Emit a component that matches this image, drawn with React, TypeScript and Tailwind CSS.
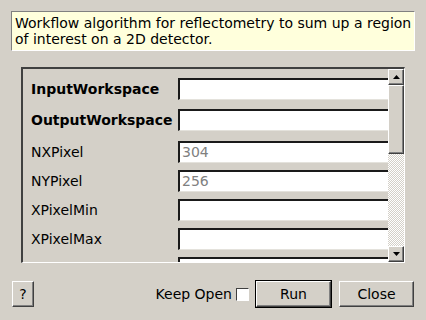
const rows = [
  { label: "InputWorkspace", bold: true, value: "", mt: "mt-[9px]" },
  { label: "OutputWorkspace", bold: true, value: "", mt: "mt-[9px]" },
  { label: "NXPixel", bold: false, value: "304", mt: "mt-[10px]" },
  { label: "NYPixel", bold: false, value: "256", mt: "mt-[7px]" },
  { label: "XPixelMin", bold: false, value: "", mt: "mt-[7px]" },
  { label: "XPixelMax", bold: false, value: "", mt: "mt-[7px]" },
  { label: "YPixelMin", bold: false, value: "", mt: "mt-[7px]" },
]

function Arrow({ up }: { up?: boolean }) {
  return (
    <svg width="7" height="4" viewBox="0 0 7 4">
      {up ? <polygon points="3.5,0 7,4 0,4" fill="#000" /> : <polygon points="0,0 7,0 3.5,4" fill="#000" />}
    </svg>
  )
}

function ScrollButton({ up }: { up?: boolean }) {
  return (
    <div className="w-[16px] h-[16px] flex items-center justify-center border-t border-l border-t-white border-l-white border-b border-r border-b-[#404040] border-r-[#404040] shadow-[inset_-1px_-1px_#808080] bg-[#d4d0c8]">
      <Arrow up={up} />
    </div>
  )
}

export default function App() {
  return (
    <div className="w-[426px] h-[320px] bg-[#d4d0c8] flex flex-col text-[14px] text-black font-['DejaVu_Sans',sans-serif] overflow-hidden">
      {/* description */}
      <div className="mt-[11px] mx-[11px] h-[40px] bg-[#ffffdc] border-t border-l border-[#808080] border-b-white border-r-white border-b border-r pl-[3px] pt-[3px] leading-[16px]">
        Workflow algorithm for reflectometry to sum up a region
        <br />
        of interest on a 2D detector.
      </div>

      {/* properties */}
      <div className="mt-[16px] mx-[21px] h-[196px] flex border-t-2 border-l-2 border-t-[#404040] border-l-[#404040] border-b border-r border-b-white border-r-white">
        <div className="flex-1 overflow-hidden">
          {rows.map((r) => (
            <div key={r.label} className={`flex items-center h-[22px] ${r.mt}`}>
              <div className={`w-[155px] pl-[8px] shrink-0 whitespace-nowrap ${r.bold ? "font-bold" : ""}`}>{r.label}</div>
              <div className="w-[230px] shrink-0 h-[22px] bg-white border-t-2 border-l-2 border-t-[#1a1a1a] border-l-[#1a1a1a] border-b border-r border-b-[#e4e2dc] border-r-[#e4e2dc] pl-[2px] leading-[18px] text-[#808080]">
                {r.value}
              </div>
            </div>
          ))}
        </div>
        <div className="w-[16px] flex flex-col">
          <ScrollButton up />
          <div className="h-[69px] border-t border-l border-t-white border-l-white border-b border-r border-b-[#404040] border-r-[#404040] shadow-[inset_-1px_-1px_#808080] bg-[#d4d0c8]" />
          <div className="flex-1 bg-[repeating-conic-gradient(#d4d0c8_0%_25%,#ffffff_0%_50%)] bg-[length:2px_2px]" />
          <ScrollButton />
        </div>
      </div>

      {/* buttons */}
      <div className="mt-[17px] h-[28px] flex items-center px-[12px]">
        <div className="w-[22px] h-[26px] flex items-center justify-center border-t border-l border-t-white border-l-white border-b border-r border-b-[#404040] border-r-[#404040] shadow-[inset_-1px_-1px_#808080]">
          ?
        </div>
        <div className="flex-1" />
        <span>Keep Open</span>
        <div className="ml-[4px] w-[13px] h-[13px] bg-white border-t border-l border-t-[#404040] border-l-[#404040] border-b border-r border-b-white border-r-white" />
        <div className="ml-[6px] w-[77px] h-[28px] border border-black">
          <div className="w-full h-full flex items-center justify-center border-t border-l border-t-white border-l-white border-b border-r border-b-[#404040] border-r-[#404040] shadow-[inset_-1px_-1px_#808080]">
            Run
          </div>
        </div>
        <div className="ml-[7px] w-[75px] h-[26px] flex items-center justify-center border-t border-l border-t-white border-l-white border-b border-r border-b-[#404040] border-r-[#404040] shadow-[inset_-1px_-1px_#808080]">
          Close
        </div>
      </div>
    </div>
  )
}
